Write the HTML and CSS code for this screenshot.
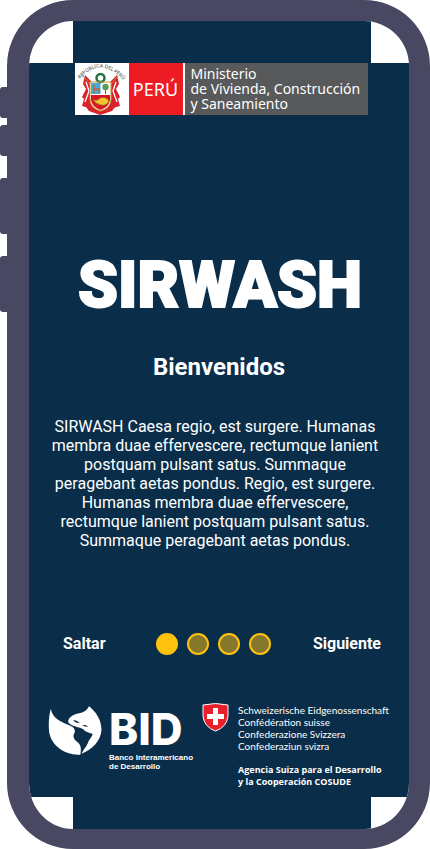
FILE: index.html
```html
<!DOCTYPE html>
<html lang="es">
<head>
<meta charset="utf-8">
<meta name="viewport" content="width=device-width, initial-scale=1">
<title>SIRWASH</title>
<link rel="stylesheet" href="styles.css">
</head>
<body>
<div class="device">
  <div class="keys" aria-hidden="true">
    <span class="key"></span>
    <span class="key"></span>
    <span class="key key-long"></span>
    <span class="key key-long"></span>
  </div>
  <main class="screen">
    <header class="ministry">
      <svg class="arms" viewBox="0 0 54 52" aria-hidden="true">
        <defs><path id="arc" d="M5 16Q25 -7 47 16"/></defs>
        <text class="arms-text"><textPath href="#arc">REPÚBLICA DEL PERÚ</textPath></text>
        <path fill="#d9232b" d="M10 12l7 7v27l-10-3 2-7-2-2 4-8-3-5zM42 12l-7 7v27l10-3-2-7 2-2-4-8 3-5z"/>
        <path fill="none" stroke="#fff" stroke-width="1.300" d="M11 19l3 9-4 11M41 19l-3 9 4 11"/>
        <path fill="none" stroke="#c58a35" d="M8 13l30 34M43 13L13 47"/>
        <path fill="#d9232b" d="M8 40h8l9 8 9-8h9l-6 8-12 4-11-4z"/>
        <path fill="#fff" stroke="#cf9a3d" d="M15 19h21v17q0 9-10.500 12Q15 45 15 36z"/>
        <path fill="#48a9dc" d="M16 20h9.500v11H16z"/>
        <path fill="#d9161f" d="M16 32h19v5q-1 7-9.500 10Q17 44 16 37z"/>
        <path fill="none" stroke="#b5682d" stroke-width="1.500" d="M19 22v4h5v4M19 26v4"/>
        <path stroke="#80572d" d="M30.500 25v6"/>
        <circle cx="30.500" cy="24" r="3.200" fill="#5c9b58"/>
        <path fill="#efc62f" stroke="#8a641d" stroke-width=".6" d="M18 36q4 3 7-1 6-2 9 3-2 5-8 4-6-1-8-6z"/>
        <circle cx="25.500" cy="15" r="4" fill="#fff" stroke="#25743d" stroke-width="2.500"/>
        <path stroke="#cf9a3d" d="M22 19h7"/>
      </svg>
      <span class="country">PERÚ</span>
      <span class="ministry-name">Ministerio<br>de Vivienda, Construcción<br>y Saneamiento</span>
    </header>

    <h1 class="title">SIRWASH</h1>
    <h2 class="subtitle">Bienvenidos</h2>
    <p class="intro">SIRWASH Caesa regio, est surgere. Humanas membra duae effervescere, rectumque lanient postquam pulsant satus. Summaque peragebant aetas pondus. Regio, est surgere. Humanas membra duae effervescere, rectumque lanient postquam pulsant satus. Summaque peragebant aetas pondus.</p>

    <nav class="steps">
      <button class="step-link" type="button">Saltar</button>
      <div class="dots">
        <span class="dot dot-current"></span>
        <span class="dot"></span>
        <span class="dot"></span>
        <span class="dot"></span>
      </div>
      <button class="step-link step-next" type="button">Siguiente</button>
    </nav>

    <footer class="partners">
      <div class="bid">
        <svg class="globe" viewBox="10 12 162 148" aria-hidden="true">
          <path fill="#fff" d="M18 20C22 48 48 60 74 70C88 76 92 82 90 92C82 104 88 114 100 122C110 130 110 145 107 159C60 162 12 130 12 78C11 52 14 34 18 20Z"/>
          <path fill="#fff" d="M133 13C150 26 171 50 171 84C170 118 140 146 111 156C114 146 124 138 130 124C134 112 144 104 144 96C132 92 122 90 116 82C100 74 80 74 71 62C68 48 84 38 104 34C120 31 128 24 133 13Z"/>
          <path fill="#0a2e4a" d="M85 56q10-3 20 7-12 2-20-7zM113 70q10-2 17 4-9 2-17-4z"/>
        </svg>
        <div class="bid-words">
          <strong class="bid-name">BID</strong>
          <span class="bid-full">Banco Interamericano<br>de Desarrollo</span>
        </div>
      </div>
      <div class="swiss">
        <svg class="shield" viewBox="0 0 27 29" aria-hidden="true">
          <path fill="#e8202c" stroke="#fff" d="M1 2Q13.500-1 26 2V13Q25 24 13.500 28Q2 24 1 13Z"/>
          <path fill="#fff" d="M11 5h5v6h6v5h-6v6h-5v-6H5v-5h6z"/>
        </svg>
        <div class="swiss-words">
          <p class="swiss-name">Schweizerische Eidgenossenschaft<br>Confédération suisse<br>Confederazione Svizzera<br>Confederaziun svizra</p>
          <p class="swiss-agency">Agencia Suiza para el Desarrollo<br>y la Cooperación COSUDE</p>
        </div>
      </div>
    </footer>
  </main>
</div>
</body>
</html>
```
FILE: styles.css
```css
* {
  box-sizing: border-box;
}

body {
  margin: 0;
  background: #fff;
  color: #fff;
  font-family: Roboto, "Liberation Sans", sans-serif;
}

h1, h2, p {
  margin: 0;
}

.device {
  --frame: #494863;
  --navy: #0a2e4a;
  display: grid;
  grid-template-columns: 7px minmax(0, 1fr);
  min-height: 100vh;
}

.keys {
  display: flex;
  flex-direction: column;
  gap: 22px;
  padding-top: 87px;
}

.key {
  height: 31px;
  border-radius: 3px 0 0 3px;
  background: var(--frame);
}

.key:first-child {
  margin-bottom: -15px;
}

.key-long {
  height: 56px;
}

.screen {
  display: flex;
  flex-direction: column;
  align-items: center;
  padding: 42px 19px 34px;
  border: 21px solid var(--frame);
  border-left-width: 22px;
  border-bottom-width: 20px;
  border-radius: 66px;
  background:
    linear-gradient(var(--navy), var(--navy)) 44px 0 / calc(100% - 82px) 100% no-repeat padding-box,
    linear-gradient(var(--navy), var(--navy)) 0 42px / 100% calc(100% - 74px) no-repeat padding-box,
    #fff;
}

.ministry {
  display: flex;
  height: 52px;
  margin-left: 4px;
  background: #58595b;
  font-family: "Noto Sans", "Open Sans", sans-serif;
}

.arms {
  width: 54px;
  height: 52px;
  background: #fff;
}

.arms-text {
  font-size: 5px;
  fill: #333;
}

.country {
  display: grid;
  place-items: center;
  width: 56px;
  border-right: 2px solid #fff;
  background: #ed1c24;
  font-size: 18px;
}

.ministry-name {
  width: 183px;
  padding: 3px 0 0 6px;
  font-size: 14px;
  line-height: 15px;
  white-space: nowrap;
}

.title {
  margin: 133px 0 0 2px;
  font-size: 64px;
  font-weight: 900;
  line-height: 75px;
  -webkit-text-stroke: 2px #fff;
}

.subtitle {
  margin-top: 30px;
  font-size: 24px;
  font-weight: 700;
  line-height: 28px;
}

.intro {
  max-width: 332px;
  margin: 36px 8px 0 0;
  font-size: 16px;
  line-height: 19px;
  text-align: center;
}

.steps {
  display: grid;
  grid-template-columns: 1fr auto 1fr;
  align-items: center;
  width: 100%;
  margin-top: 83px;
  padding: 0 9px 0 15px;
}

.step-link {
  justify-self: start;
  padding: 0;
  border: 0;
  background: none;
  color: inherit;
  font: 700 16px/22px Roboto, "Liberation Sans", sans-serif;
}

.step-next {
  justify-self: end;
}

.dots {
  display: flex;
  gap: 9px;
  margin-right: 18px;
}

.dot {
  width: 22px;
  height: 22px;
  border: 2px solid #ffc20e;
  border-radius: 50%;
  background: #85782c;
}

.dot-current {
  background: #ffc20e;
}

.partners {
  display: flex;
  gap: 9px;
  width: 100%;
  margin-top: 48px;
}

.bid {
  display: flex;
  gap: 7px;
  padding-top: 3px;
}

.globe {
  width: 54px;
  height: 49px;
}

.bid-words {
  display: flex;
  flex-direction: column;
}

.bid-name {
  padding-top: 6px;
  font-family: Inter, "Liberation Sans", sans-serif;
  font-size: 44px;
  font-weight: 800;
  line-height: 34px;
}

.bid-full {
  margin-top: 7px;
  font: 700 8px/9px "Liberation Sans", sans-serif;
  white-space: nowrap;
}

.swiss {
  display: flex;
  gap: 9px;
}

.shield {
  width: 27px;
  height: 29px;
}

.swiss-words {
  font-family: "Open Sans", "Noto Sans", sans-serif;
  font-size: 9px;
  line-height: 12px;
  white-space: nowrap;
}

.swiss-name {
  padding-top: 1px;
  font-family: Lato, "Open Sans", sans-serif;
  font-size: 10px;
}

.swiss-agency {
  margin-top: 12px;
  font-weight: 700;
}
```
